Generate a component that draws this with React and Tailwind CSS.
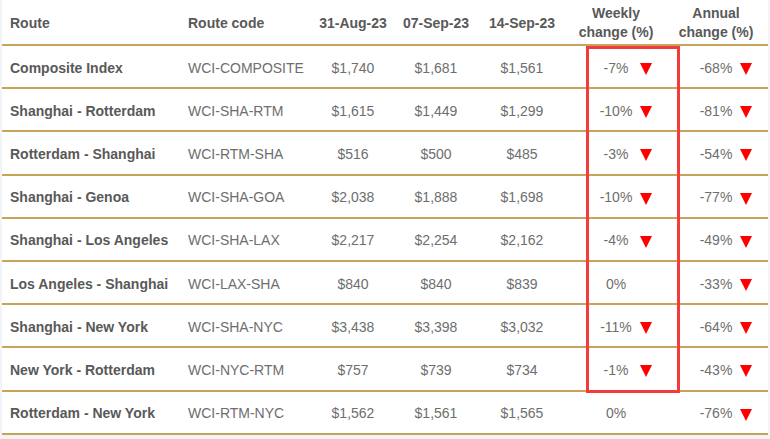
import React from "react";

const rows = [
  ["Composite Index", "WCI-COMPOSITE", "$1,740", "$1,681", "$1,561", "-7%", true, "-68%", true],
  ["Shanghai - Rotterdam", "WCI-SHA-RTM", "$1,615", "$1,449", "$1,299", "-10%", true, "-81%", true],
  ["Rotterdam - Shanghai", "WCI-RTM-SHA", "$516", "$500", "$485", "-3%", true, "-54%", true],
  ["Shanghai - Genoa", "WCI-SHA-GOA", "$2,038", "$1,888", "$1,698", "-10%", true, "-77%", true],
  ["Shanghai - Los Angeles", "WCI-SHA-LAX", "$2,217", "$2,254", "$2,162", "-4%", true, "-49%", true],
  ["Los Angeles - Shanghai", "WCI-LAX-SHA", "$840", "$840", "$839", "0%", false, "-33%", true],
  ["Shanghai - New York", "WCI-SHA-NYC", "$3,438", "$3,398", "$3,032", "-11%", true, "-64%", true],
  ["New York - Rotterdam", "WCI-NYC-RTM", "$757", "$739", "$734", "-1%", true, "-43%", true],
  ["Rotterdam - New York", "WCI-RTM-NYC", "$1,562", "$1,561", "$1,565", "0%", false, "-76%", true],
];

const grid = "grid grid-cols-[178px_130px_86px_80px_92px_96px_104px]";

function Arrow() {
  return (
    <span className="absolute left-[calc(50%+24px)] top-1/2 mt-[-5px] w-0 h-0 border-l-[6px] border-r-[6px] border-t-[12px] border-l-transparent border-r-transparent border-t-[#ff0000]" />
  );
}

function Change({ v, down }) {
  return (
    <div className="relative flex items-center justify-center">
      <span>{v}</span>
      {down && <Arrow />}
    </div>
  );
}

export default function App() {
  return (
    <div className="w-[770px] h-[439px] bg-[#f3f4f8] overflow-hidden" style={{ fontFamily: '"Liberation Sans", Arial, sans-serif' }}>
      <div className="relative ml-[2px] w-[766px] bg-white">
        <div className={`${grid} h-[46px] pt-[2px] border-b-2 border-[#c8a45b] text-[14px] font-bold text-[#595959] leading-[19px]`}>
          <div className="flex items-center pl-2">Route</div>
          <div className="flex items-center pl-2">Route code</div>
          <div className="flex items-center justify-center">31-Aug-23</div>
          <div className="flex items-center justify-center">07-Sep-23</div>
          <div className="flex items-center justify-center">14-Sep-23</div>
          <div className="flex items-center justify-center text-center">Weekly<br />change (%)</div>
          <div className="flex items-center justify-center text-center">Annual<br />change (%)</div>
        </div>
        {rows.map((r, i) => (
          <div key={i} className={`${grid} h-[43.2px] pt-[3px] border-b-2 border-[#c8a45b] text-[14px] text-[#6e6e6e]`}>
            <div className="flex items-center pl-2 font-bold text-[#595959]">{r[0]}</div>
            <div className="flex items-center pl-2">{r[1]}</div>
            <div className="flex items-center justify-center">{r[2]}</div>
            <div className="flex items-center justify-center">{r[3]}</div>
            <div className="flex items-center justify-center">{r[4]}</div>
            <Change v={r[5]} down={r[6]} />
            <Change v={r[7]} down={r[8]} />
          </div>
        ))}
        <div className="absolute left-[584px] top-[46px] w-[94px] h-[347px] border-[3px] border-[#f23b3b]" />
      </div>
    </div>
  );
}
